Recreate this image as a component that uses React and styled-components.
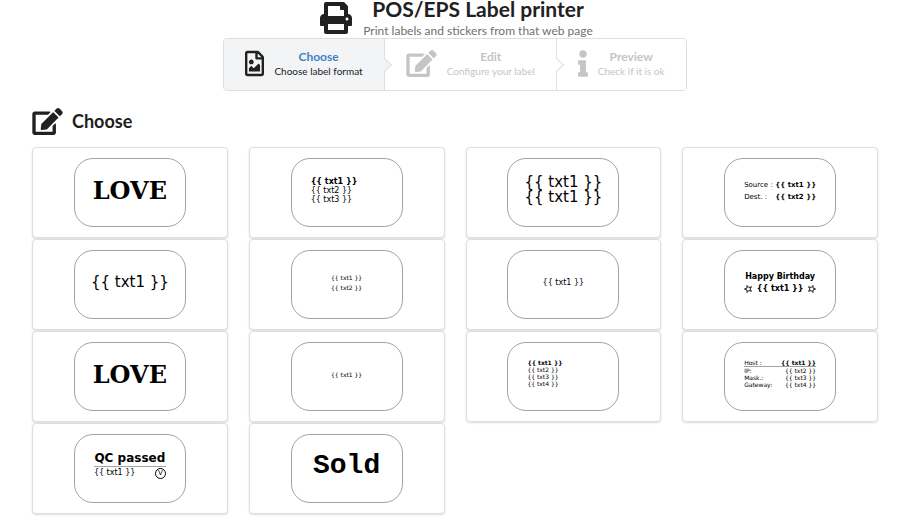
import React from "react";
import styled, { createGlobalStyle, css } from "styled-components";
import { FaPrint, FaRegFileImage, FaEdit, FaInfo } from "react-icons/fa";

const GlobalStyle = createGlobalStyle`
  *, *::before, *::after { box-sizing: border-box; }
  body {
    margin: 0;
    background: #fff;
    color: #212121;
    font-family: Lato, "Liberation Sans", sans-serif;
    font-size: 12px;
  }
`;

const Page = styled.main`
  padding: 0 41px 16px 32px;
`;

const IconBox = styled.span`
  display: flex;
  flex: none;
  width: ${(p) => p.$width}px;

  svg {
    width: 100%;
    height: ${(p) => p.$height}px;
  }
`;

const Masthead = styled.header`
  display: flex;
  justify-content: center;
  align-items: flex-start;
  gap: 11px;
  height: 38px;
  padding: 2px 0 0 3px;
`;

const MastheadText = styled.div`
  text-align: center;
`;

const Title = styled.h1`
  margin: 0 0 6px;
  font-size: 21px;
  line-height: 14px;
  font-weight: 700;
`;

const Subtitle = styled.p`
  margin: 0;
  font-size: 12px;
  line-height: 18px;
  color: #707070;
`;

const StepBar = styled.nav`
  display: flex;
  justify-content: center;
`;

const StepList = styled.ol`
  display: flex;
  margin: 0;
  padding: 0;
  list-style: none;
  border: 1px solid #dededf;
  border-radius: 4px;
`;

const StepItem = styled.li`
  position: relative;
  display: flex;
  background: ${(p) => (p.$active ? "#f3f4f5" : "#fff")};
  border-radius: 3px;

  &:not(:last-child) {
    border-right: 1px solid #dededf;
    border-radius: 3px 0 0 3px;
  }

  &:not(:last-child)::after {
    content: "";
    position: absolute;
    z-index: 1;
    top: 50%;
    right: 0;
    width: 11px;
    height: 11px;
    background: inherit;
    border: solid #dededf;
    border-width: 0 1px 1px 0;
    transform: translate(50%, -50%) rotate(-45deg);
  }
`;

const StepLink = styled.a`
  display: flex;
  align-items: center;
  gap: 10px;
  height: 51px;
  padding: 0 21px 2px;
  text-decoration: none;
  text-align: center;
  color: ${(p) => (p.$active ? "#212121" : "#c5c5c5")};
`;

const StepTitle = styled.span`
  display: block;
  font-size: 12px;
  line-height: 15px;
  font-weight: 700;
  color: ${(p) => (p.$active ? "#4183c4" : "inherit")};
`;

const StepText = styled.span`
  display: block;
  font-size: 10px;
  line-height: 14px;
`;

const SectionHeading = styled.h2`
  display: flex;
  align-items: center;
  gap: 9px;
  margin: 15px 0 11px;
  font-size: 18px;
  line-height: 30px;
  font-weight: 700;
`;

const CardGrid = styled.div`
  display: grid;
  grid-template-columns: repeat(4, minmax(0, 1fr));
  gap: 1px 21px;
`;

const Card = styled.button`
  display: flex;
  justify-content: center;
  padding: 10px;
  border: 1px solid #dededf;
  border-radius: 4px;
  background: #fff;
  box-shadow: 0 1px 2px rgba(34, 36, 38, 0.15);
  color: #000;
  font: inherit;
  cursor: pointer;
`;

const Label = styled.span`
  display: flex;
  flex-direction: column;
  width: 112px;
  height: 69px;
  padding: ${(p) => p.$top}px 19px 0;
  border: 1px solid #a3a3a3;
  border-radius: 19px;
  text-align: left;
  font-family: "DejaVu Sans", sans-serif;
`;

const Line = styled.span`
  display: flex;
  justify-content: ${(p) => p.$justify || "center"};
  align-items: center;
  font-size: ${(p) => p.$size}px;
  line-height: ${(p) => p.$height}px;
  font-weight: ${(p) => (p.$bold ? 700 : 400)};
  white-space: nowrap;
  ${(p) =>
    p.$ruled &&
    css`
      border-bottom: 1px solid #a3a3a3;
    `}
`;

const Slab = styled(Line)`
  font-family: ${(p) => p.$face};
`;

const Value = styled.span`
  font-weight: ${(p) => (p.$bold ? 700 : 400)};
`;

const Seal = styled.span`
  width: 11px;
  height: 11px;
  border: 1px solid #000;
  border-radius: 50%;
  font-size: 7px;
  line-height: 9px;
  text-align: center;
`;

const StarIcon = styled.svg`
  width: 8px;
  height: 8px;
  fill: none;
  stroke: #000;
  transform: rotate(${(p) => p.$turn}deg);
`;

const Star = ({ turn }) => (
  <StarIcon viewBox="0 0 16 16" strokeWidth="1.8" $turn={turn} aria-hidden="true">
    <path d="M8 1l2 5h5l-4 3.500 1.500 5.500L8 12l-4.500 3L5 9.500 1 6h5z" />
  </StarIcon>
);

const steps = [
  { title: "Choose", text: "Choose label format", icon: FaRegFileImage, width: 19, active: true },
  { title: "Edit", text: "Configure your label", icon: FaEdit, width: 31 },
  { title: "Preview", text: "Check if it is ok", icon: FaInfo, width: 10 },
];

const field = (n) => `{{ txt${n} }}`;

const Love = () => (
  <Label $top={16}>
    <Slab $face={'"DejaVu Serif", serif'} $size={24} $height={32} $bold>LOVE</Slab>
  </Label>
);

const Single = ({ size }) => (
  <Label $top={24}>
    <Line $size={size} $height={15}>{field(1)}</Line>
  </Label>
);

const Listing = ({ count, size, height, top }) => (
  <Label $top={top}>
    {Array.from({ length: count }, (_, i) => (
      <Line key={i} $justify="flex-start" $size={size} $height={height} $bold={i === 0}>
        {field(i + 1)}
      </Line>
    ))}
  </Label>
);

const labels = [
  <Love />,
  <Listing count={3} size={8} height={9} top={18} />,
  <Label $top={16}>
    <Line $size={15} $height={15}>{field(1)}</Line>
    <Line $size={15} $height={15}>{field(1)}</Line>
  </Label>,
  <Label $top={20}>
    <Line $justify="space-between" $size={7} $height={12}>Source : <Value $bold>{field(1)}</Value></Line>
    <Line $justify="space-between" $size={7} $height={12}>Dest. : <Value $bold>{field(2)}</Value></Line>
  </Label>,
  <Single size={15} />,
  <Label $top={22}>
    <Line $size={6} $height={10}>{field(1)}</Line>
    <Line $size={6} $height={10}>{field(2)}</Line>
  </Label>,
  <Single size={8} />,
  <Label $top={20}>
    <Line $size={8} $height={12} $bold>Happy Birthday</Line>
    <Line $justify="space-between" $size={8} $height={12} $bold>
      <Star turn={-90} />
      {field(1)}
      <Star turn={90} />
    </Line>
  </Label>,
  <Love />,
  <Single size={6} />,
  <Listing count={4} size={6} height={7} top={16} />,
  <Label $top={16}>
    <Line $justify="space-between" $size={6} $height={7} $ruled>Host : <Value $bold>{field(1)}</Value></Line>
    <Line $justify="space-between" $size={6} $height={7}>IP: <Value>{field(2)}</Value></Line>
    <Line $justify="space-between" $size={6} $height={7}>Mask.: <Value>{field(3)}</Value></Line>
    <Line $justify="space-between" $size={6} $height={7}>Gateway: <Value>{field(4)}</Value></Line>
  </Label>,
  <Label $top={16}>
    <Line $size={12} $height={15} $bold $ruled>QC passed</Line>
    <Line $justify="space-between" $size={8} $height={12}>{field(1)} <Seal>V</Seal></Line>
  </Label>,
  <Label $top={16}>
    <Slab $face={'"Liberation Mono", monospace'} $size={28} $height={30} $bold>Sold</Slab>
  </Label>,
];

export default function App() {
  return (
    <>
      <GlobalStyle />
      <Page>
        <Masthead>
          <IconBox $width={32} $height={32}>
            <FaPrint aria-hidden="true" />
          </IconBox>
          <MastheadText>
            <Title>POS/EPS Label printer</Title>
            <Subtitle>Print labels and stickers from that web page</Subtitle>
          </MastheadText>
        </Masthead>
        <StepBar aria-label="Progress">
          <StepList>
            {steps.map(({ title, text, icon: Icon, width, active }) => (
              <StepItem key={title} $active={active}>
                <StepLink href={`#${title.toLowerCase()}`} $active={active} aria-disabled={!active}>
                  <IconBox $width={width} $height={27}>
                    <Icon aria-hidden="true" />
                  </IconBox>
                  <span>
                    <StepTitle $active={active}>{title}</StepTitle>
                    <StepText>{text}</StepText>
                  </span>
                </StepLink>
              </StepItem>
            ))}
          </StepList>
        </StepBar>
        <SectionHeading>
          <IconBox $width={31} $height={27}>
            <FaEdit aria-hidden="true" />
          </IconBox>
          Choose
        </SectionHeading>
        <CardGrid>
          {labels.map((label, i) => (
            <Card key={i} type="button">{label}</Card>
          ))}
        </CardGrid>
      </Page>
    </>
  );
}
